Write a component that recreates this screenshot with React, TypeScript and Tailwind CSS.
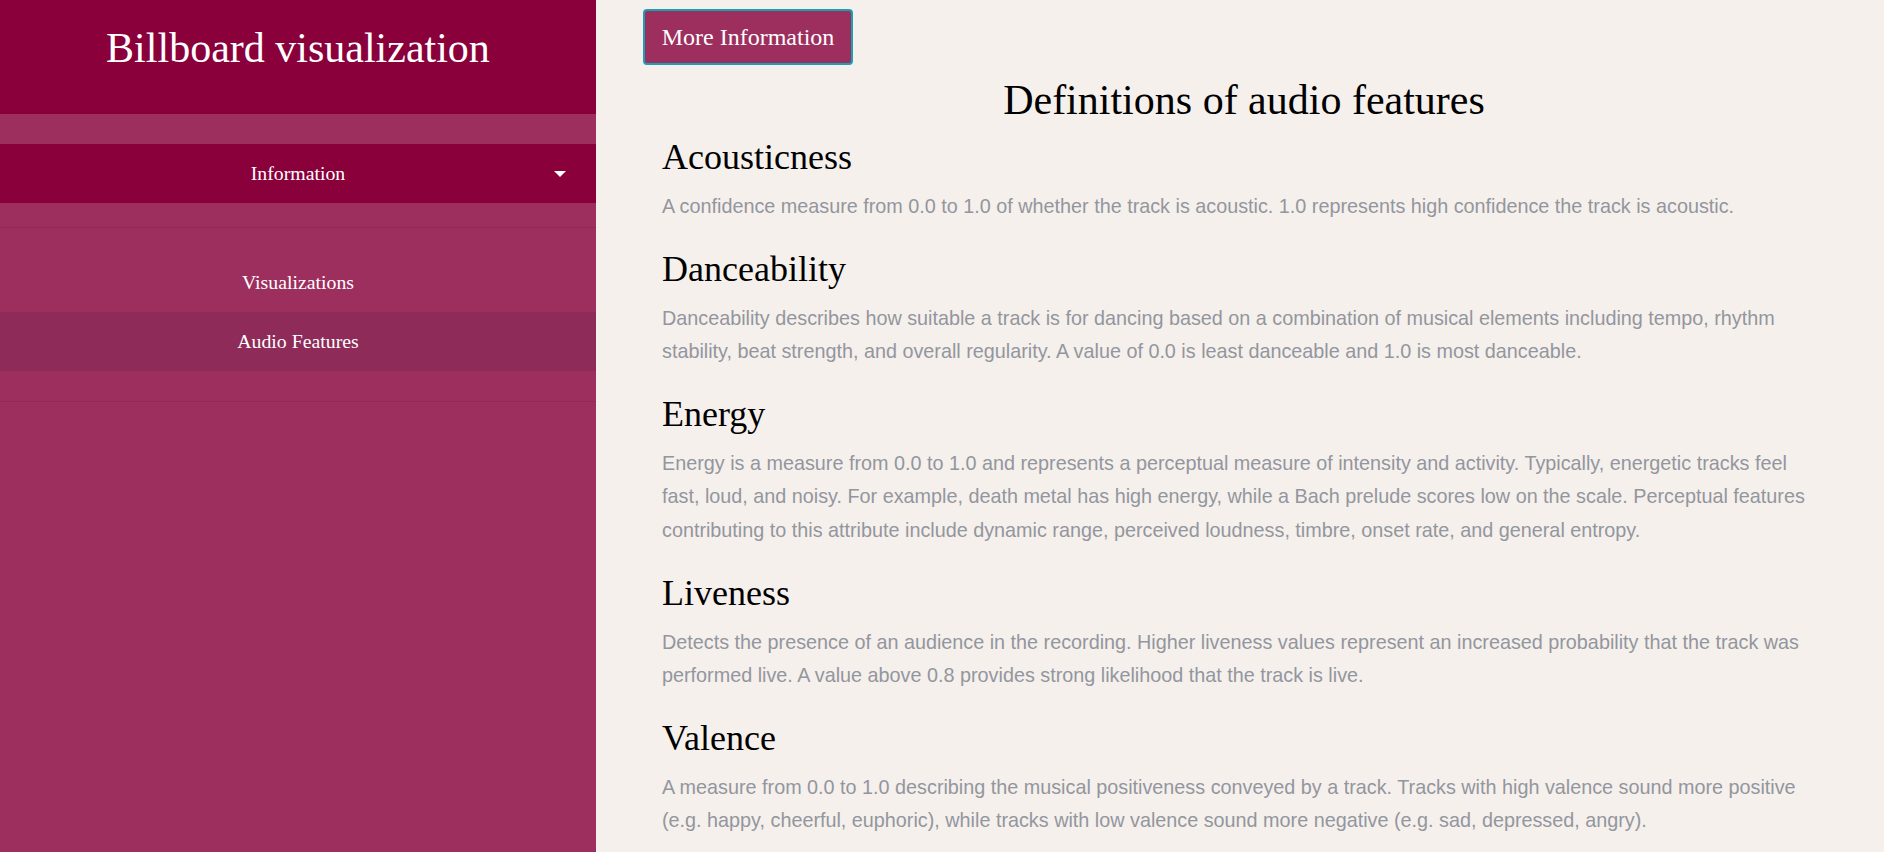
const features = [
  {
    name: "Acousticness",
    text: "A confidence measure from 0.0 to 1.0 of whether the track is acoustic. 1.0 represents high confidence the track is acoustic.",
  },
  {
    name: "Danceability",
    text: "Danceability describes how suitable a track is for dancing based on a combination of musical elements including tempo, rhythm stability, beat strength, and overall regularity. A value of 0.0 is least danceable and 1.0 is most danceable.",
  },
  {
    name: "Energy",
    text: "Energy is a measure from 0.0 to 1.0 and represents a perceptual measure of intensity and activity. Typically, energetic tracks feel fast, loud, and noisy. For example, death metal has high energy, while a Bach prelude scores low on the scale. Perceptual features contributing to this attribute include dynamic range, perceived loudness, timbre, onset rate, and general entropy.",
  },
  {
    name: "Liveness",
    text: "Detects the presence of an audience in the recording. Higher liveness values represent an increased probability that the track was performed live. A value above 0.8 provides strong likelihood that the track is live.",
  },
  {
    name: "Valence",
    text: "A measure from 0.0 to 1.0 describing the musical positiveness conveyed by a track. Tracks with high valence sound more positive (e.g. happy, cheerful, euphoric), while tracks with low valence sound more negative (e.g. sad, depressed, angry).",
  },
];

const serif = "font-['Liberation_Serif','Times_New_Roman',serif]";

function Sidebar() {
  return (
    <aside className={`flex w-[596px] shrink-0 flex-col bg-[#9d2f5e] text-white ${serif}`}>
      <div className="flex h-[114px] justify-center bg-[#8a003b] pt-[22px]">
        <h1 className="text-[42px] leading-[52px]">Billboard visualization</h1>
      </div>
      <div className="border-b border-[#91285a] pt-[30px] pb-[24px]">
        <button className="relative flex h-[59px] w-full items-center justify-center bg-[#8a003b] text-[19.8px]">
          Information
          <span className="absolute right-[30px] top-[27px] h-0 w-0 border-x-[6px] border-t-[6px] border-x-transparent border-t-white" />
        </button>
      </div>
      <div className="border-b border-[#91285a] pt-[25px] pb-[30px]">
        <a className="flex h-[59px] items-center justify-center text-[19.8px]">Visualizations</a>
        <a className="flex h-[59px] items-center justify-center bg-[#8e2b58] text-[19.8px]">Audio Features</a>
      </div>
    </aside>
  );
}

export default function App() {
  return (
    <div className="flex h-[852px] overflow-hidden bg-[#f5f0ec]">
      <Sidebar />
      <main className="flex-1 px-[47px] pt-[9px]">
        <button
          className={`h-[56px] w-[210px] rounded-[4px] border-2 border-[#1a9fb3] bg-[#9d2f5e] text-[24px] text-white ${serif}`}
        >
          More Information
        </button>
        <div className="pl-[19px] pr-[14px]">
          <h2 className={`mt-[10px] mb-[11px] pl-[3px] text-center text-[42px] leading-[50px] text-black ${serif}`}>
            Definitions of audio features
          </h2>
          {features.map((f) => (
            <section key={f.name} className="mb-[24px]">
              <h3 className={`mb-[11px] text-[36px] leading-[43px] text-black ${serif}`}>{f.name}</h3>
              <p className="font-['Liberation_Sans',Arial,sans-serif] text-[19.8px] leading-[33.6px] text-[#93969e]">
                {f.text}
              </p>
            </section>
          ))}
        </div>
      </main>
    </div>
  );
}
